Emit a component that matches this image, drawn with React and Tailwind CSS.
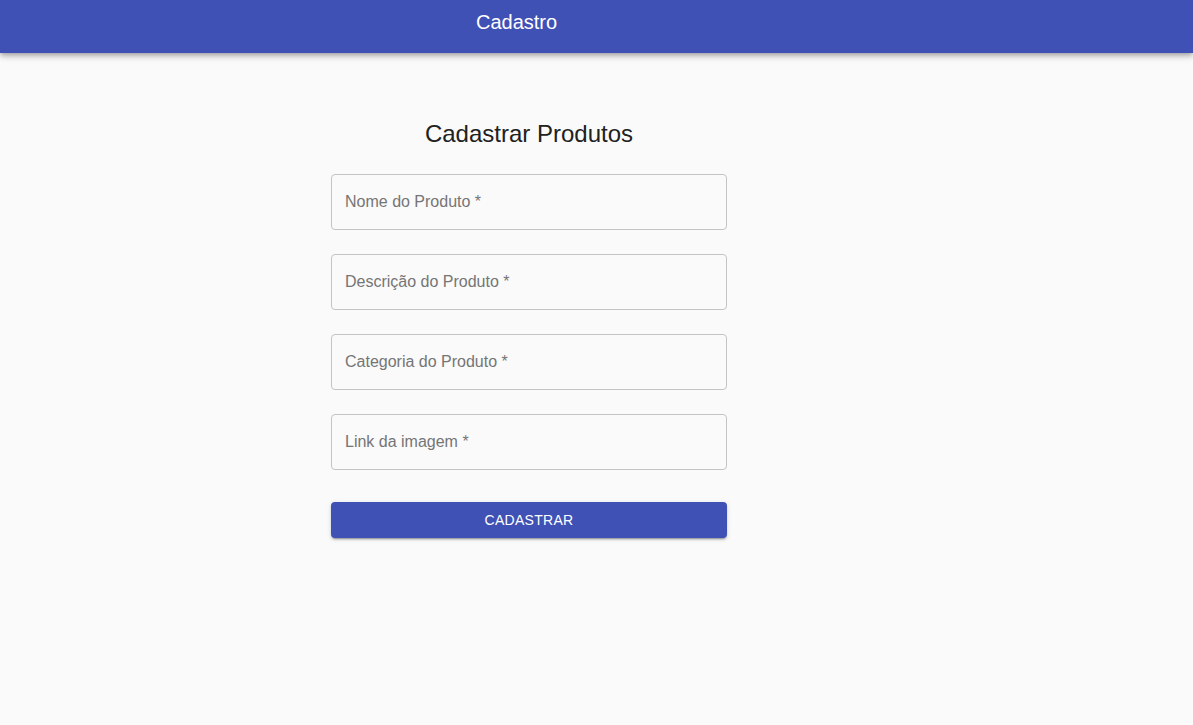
import React from 'react'

const fields = ['Nome do Produto *', 'Descrição do Produto *', 'Categoria do Produto *', 'Link da imagem *']

const App = () => {
  return (
    <div className="min-h-screen bg-[#fafafa] font-['Liberation_Sans',Arial,sans-serif]">
      {/* App bar */}
      <header className="h-[53px] bg-[#3f51b5] flex items-center shadow-[0_2px_4px_-1px_rgba(0,0,0,0.2),0_4px_5px_0_rgba(0,0,0,0.14),0_1px_10px_0_rgba(0,0,0,0.12)]">
        <h1 className="ml-[476px] text-white text-[20px] leading-none -mt-[9px]">Cadastro</h1>
      </header>

      <main className="flex pl-[331px] pt-[67px]">
        <div className="w-[396px] flex flex-col items-center">
          <h2 className="text-[24px] leading-[28px] text-[#212121] mb-[26px]">Cadastrar Produtos</h2>
          <div className="w-full flex flex-col gap-[24px]">
            {fields.map((f) => (
              <div
                key={f}
                className="h-[56px] w-full rounded-[4px] border border-[#c4c4c4] flex items-center pl-[13px] pr-[14px] text-[16px] text-[#757575]"
              >
                <span className="-mt-[1px]">{f}</span>
              </div>
            ))}
          </div>
          <button className="mt-[32px] w-full h-[36px] rounded-[4px] bg-[#3f51b5] text-white text-[14px] tracking-[0.02em] uppercase shadow-[0_3px_1px_-2px_rgba(0,0,0,0.2),0_2px_2px_0_rgba(0,0,0,0.14),0_1px_5px_0_rgba(0,0,0,0.12)]">
            Cadastrar
          </button>
        </div>
      </main>
    </div>
  )
}

export default App
